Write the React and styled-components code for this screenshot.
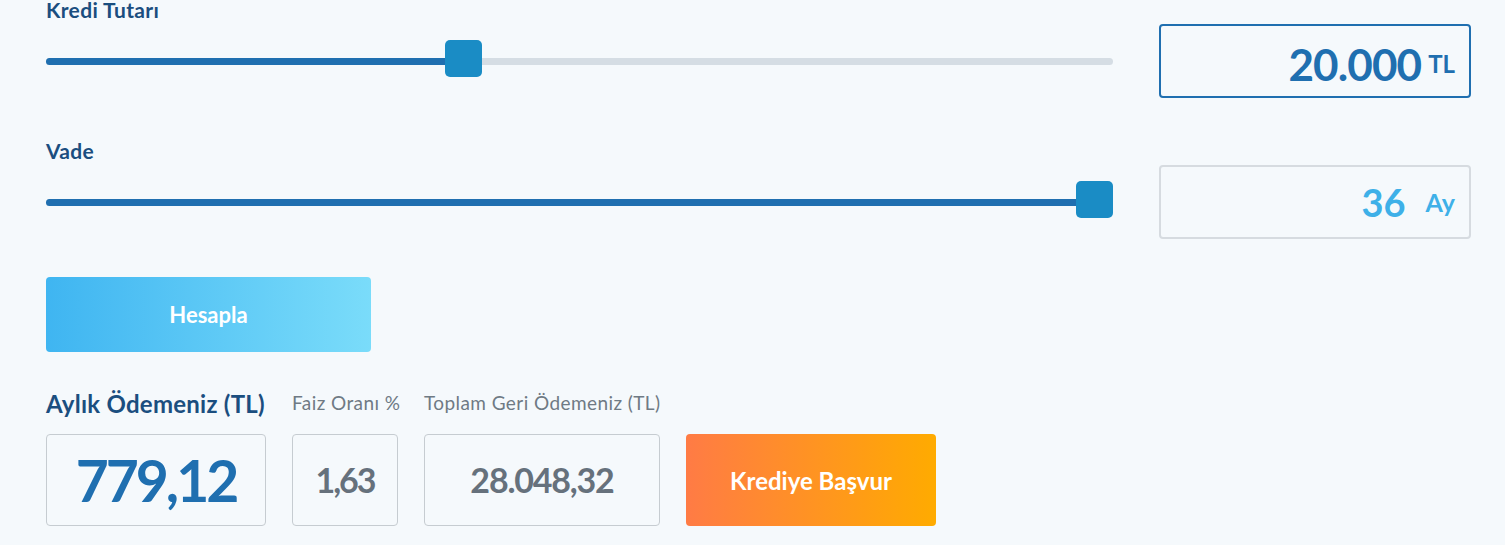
import React from 'react';
import styled, { createGlobalStyle } from 'styled-components';

const GlobalStyle = createGlobalStyle`
  html, body { margin: 0; padding: 0; background: #f5f9fc; }
  body { font-family: Lato, "Noto Sans", sans-serif; -webkit-font-smoothing: antialiased; }
  * { box-sizing: border-box; }
`;

const Page = styled.main`
  width: 1505px;
  height: 545px;
  overflow: hidden;
  padding: 0 34px 0 46px;
  display: flex;
  flex-direction: column;
  background: #f5f9fc;
`;

const Field = styled.section`
  display: flex;
  flex-direction: column;
  gap: 4px;
  margin-top: ${(p) => p.$top || 0}px;
`;

const FieldLabel = styled.label`
  font-size: 21px;
  line-height: 20px;
  font-weight: 700;
  letter-spacing: 0.35px;
  color: #1b4e7f;
`;

const FieldRow = styled.div`
  display: grid;
  grid-template-columns: 1067px 312px;
  column-gap: 46px;
  align-items: center;
  height: 74px;
`;

const Track = styled.div`
  position: relative;
  height: 7px;
  border-radius: 4px;
  background: #d5dde4;
`;

const Fill = styled.div`
  position: absolute;
  left: 0;
  top: 0;
  bottom: 0;
  border-radius: 4px 0 0 4px;
  background: #1f6fb0;
`;

const Thumb = styled.div`
  position: absolute;
  top: 50%;
  width: 37px;
  height: 37px;
  margin-top: -21.5px;
  border-radius: 5px;
  background: #1a8cc5;
`;

const ValueBox = styled.div`
  height: 74px;
  border: 2px solid ${(p) => (p.$active ? '#1f6fb0' : '#d6dbe0')};
  border-radius: 4px;
  display: flex;
  align-items: center;
  justify-content: flex-end;
  padding: ${(p) => (p.$active ? '6px 14px 0 14px' : '0 14px')};
  gap: ${(p) => p.$gap}px;
  color: ${(p) => (p.$active ? '#1f6fb0' : '#3eb0e8')};
`;

const Amount = styled.span`
  font-size: ${(p) => p.$size}px;
  line-height: 1;
  font-weight: 700;
  letter-spacing: ${(p) => p.$spacing || 0}px;
`;

const Unit = styled.span`
  font-size: ${(p) => p.$size}px;
  line-height: 1;
  font-weight: 700;
`;

const CalcButton = styled.button`
  margin-top: 38px;
  width: 325px;
  height: 75px;
  border: 0;
  border-radius: 4px;
  background: linear-gradient(90deg, #3fb5f1 0%, #7adcfa 100%);
  color: #fff;
  font-family: inherit;
  font-size: 22px;
  font-weight: 700;
  cursor: pointer;
`;

const Results = styled.section`
  margin-top: 38px;
  display: flex;
  align-items: flex-end;
  gap: 26px;
`;

const ResultColumn = styled.div`
  display: flex;
  flex-direction: column;
  width: ${(p) => p.$width}px;
`;

const ResultLabel = styled.div`
  white-space: nowrap;
  font-size: ${(p) => (p.$primary ? 24 : 19)}px;
  line-height: ${(p) => (p.$primary ? 28 : 24)}px;
  margin-bottom: ${(p) => (p.$primary ? 16 : 19)}px;
  font-weight: ${(p) => (p.$primary ? 700 : 400)};
  letter-spacing: ${(p) => (p.$primary ? 0.25 : 0.42)}px;
  color: ${(p) => (p.$primary ? '#1b4e7f' : '#6f7a84')};
`;

const ResultBox = styled.div`
  height: 92px;
  border: 1px solid #c6ccd1;
  border-radius: 4px;
  display: flex;
  align-items: center;
  justify-content: center;
`;

const ResultValue = styled.span`
  font-size: ${(p) => p.$size}px;
  line-height: 1;
  font-weight: 700;
  letter-spacing: ${(p) => p.$spacing}px;
  color: ${(p) => (p.$primary ? '#1f6fb0' : '#66717c')};
`;

const ApplyButton = styled.button`
  width: 250px;
  height: 92px;
  border: 0;
  border-radius: 4px;
  background: linear-gradient(90deg, #ff7b45 0%, #ffab00 100%);
  color: #fff;
  font-family: inherit;
  font-size: 24px;
  font-weight: 700;
  cursor: pointer;
`;

const TRACK_W = 1067;
const THUMB_W = 37;

function Slider({ fraction }) {
  const left = fraction * (TRACK_W - THUMB_W);
  return (
    <Track>
      <Fill style={{ width: left + THUMB_W / 2 }} />
      <Thumb style={{ left }} />
    </Track>
  );
}

export default function App() {
  return (
    <Page>
      <GlobalStyle />
      <Field>
        <FieldLabel>Kredi Tutarı</FieldLabel>
        <FieldRow>
          <Slider fraction={0.3875} />
          <ValueBox $active $gap={7}>
            <Amount $size={44} $spacing={-0.9}>20.000</Amount>
            <Unit $size={24}>TL</Unit>
          </ValueBox>
        </FieldRow>
      </Field>
      <Field $top={43}>
        <FieldLabel>Vade</FieldLabel>
        <FieldRow>
          <Slider fraction={1} />
          <ValueBox $gap={20}>
            <Amount $size={38}>36</Amount>
            <Unit $size={25}>Ay</Unit>
          </ValueBox>
        </FieldRow>
      </Field>
      <CalcButton>Hesapla</CalcButton>
      <Results>
        <ResultColumn $width={220}>
          <ResultLabel $primary>Aylık Ödemeniz (TL)</ResultLabel>
          <ResultBox>
            <ResultValue $primary $size={57} $spacing={-3}>779,12</ResultValue>
          </ResultBox>
        </ResultColumn>
        <ResultColumn $width={106}>
          <ResultLabel>Faiz Oranı %</ResultLabel>
          <ResultBox>
            <ResultValue $size={34} $spacing={-2}>1,63</ResultValue>
          </ResultBox>
        </ResultColumn>
        <ResultColumn $width={236}>
          <ResultLabel>Toplam Geri Ödemeniz (TL)</ResultLabel>
          <ResultBox>
            <ResultValue $size={34} $spacing={-1.2}>28.048,32</ResultValue>
          </ResultBox>
        </ResultColumn>
        <ApplyButton>Krediye Başvur</ApplyButton>
      </Results>
    </Page>
  );
}
